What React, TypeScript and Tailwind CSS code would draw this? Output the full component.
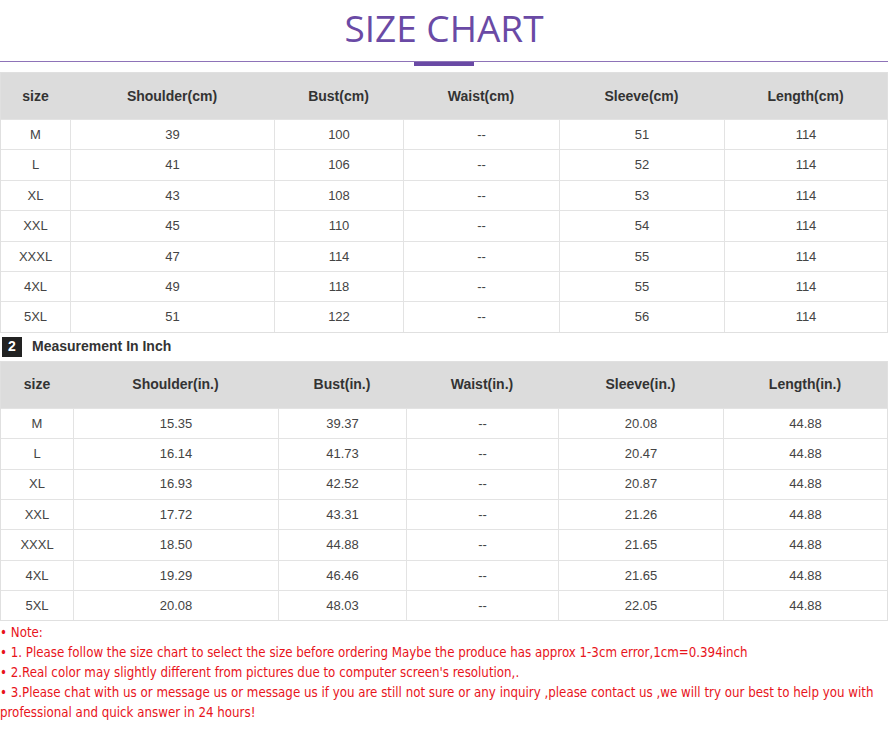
const cm = [
  ["M","39","100","--","51","114"],["L","41","106","--","52","114"],["XL","43","108","--","53","114"],
  ["XXL","45","110","--","54","114"],["XXXL","47","114","--","55","114"],["4XL","49","118","--","55","114"],["5XL","51","122","--","56","114"]];
const inch = [
  ["M","15.35","39.37","--","20.08","44.88"],["L","16.14","41.73","--","20.47","44.88"],["XL","16.93","42.52","--","20.87","44.88"],
  ["XXL","17.72","43.31","--","21.26","44.88"],["XXXL","18.50","44.88","--","21.65","44.88"],["4XL","19.29","46.46","--","21.65","44.88"],["5XL","20.08","48.03","--","22.05","44.88"]];

function Table({ head, rows, cols, hh }: { head: string[]; rows: string[][]; cols: string; hh: string }) {
  return (
    <div className="border border-[#e0e0e0]">
      <div className={`grid ${cols} ${hh} bg-[#dcdcdc] items-center text-[14px] font-bold text-[#333]`}>
        {head.map((h, i) => <div key={i} className="text-center">{h}</div>)}
      </div>
      {rows.map((r, i) => (
        <div key={i} className={`grid ${cols} h-[30.4px] border-t border-[#e3e3e3] text-[13px] text-[#444]`}>
          {r.map((c, j) => (
            <div key={j} className={`flex items-center justify-center ${j > 0 ? "border-l border-[#e3e3e3]" : ""}`}>{c}</div>
          ))}
        </div>
      ))}
    </div>
  );
}

export default function App() {
  return (
    <div className="w-[888px] h-[738px] bg-white overflow-hidden" style={{ fontFamily: '"Liberation Sans", Arial, sans-serif' }}>
      <div className="h-[61px] flex items-end justify-center pb-[15px]">
        <div className="text-[37px] leading-none text-[#6a4aa5]" style={{ fontFamily: '"Open Sans", sans-serif' }}>SIZE CHART</div>
      </div>
      <div className="h-px bg-[#8e73b8]" />
      <div className="flex justify-center"><div className="w-[60px] h-[4px] bg-[#6a4aa5]" /></div>
      <div className="h-[6px]" />
      <Table hh="h-[46px]" cols="grid-cols-[69px_204px_129px_156px_165px_1fr]"
        head={["size","Shoulder(cm)","Bust(cm)","Waist(cm)","Sleeve(cm)","Length(cm)"]} rows={cm} />
      <div className="h-[28px] flex items-center gap-[10px] pl-[2px]">
        <div className="w-[20px] h-[20px] bg-[#222] text-white font-bold text-[14px] flex items-center justify-center">2</div>
        <div className="text-[14px] font-bold text-[#333]">Measurement In Inch</div>
      </div>
      <Table hh="h-[46px]" cols="grid-cols-[72px_205px_128px_152px_165px_1fr]"
        head={["size","Shoulder(in.)","Bust(in.)","Waist(in.)","Sleeve(in.)","Length(in.)"]} rows={inch} />
      <div className="text-[#e8141b] text-[13.2px] leading-[20px] mt-[2px]" style={{ fontFamily: '"DejaVu Sans Condensed", "Liberation Sans", sans-serif' }}>
        <div>• Note:</div>
        <div>• 1. Please follow the size chart to select the size before ordering Maybe the produce has approx 1-3cm error,1cm=0.394inch</div>
        <div>• 2.Real color may slightly different from pictures due to computer screen's resolution,.</div>
        <div>• 3.Please chat with us or message us or message us if you are still not sure or any inquiry ,please contact us ,we will try our best to help you with professional and quick answer in 24 hours!</div>
      </div>
    </div>
  );
}
